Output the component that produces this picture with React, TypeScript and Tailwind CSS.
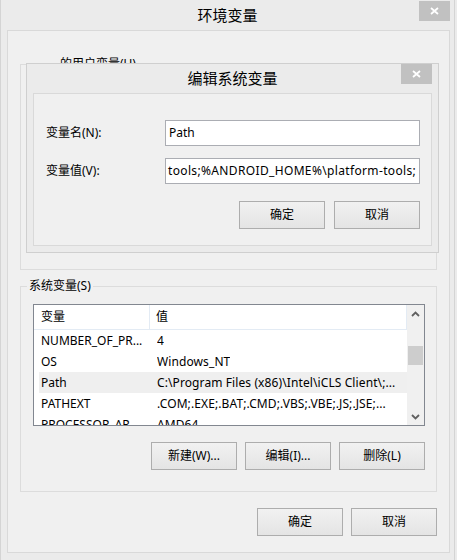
import React from "react";

const rows = [
  { name: "NUMBER_OF_PR...", value: "4" },
  { name: "OS", value: "Windows_NT" },
  { name: "Path", value: "C:\\Program Files (x86)\\Intel\\iCLS Client\\;...", selected: true },
  { name: "PATHEXT", value: ".COM;.EXE;.BAT;.CMD;.VBS;.VBE;.JS;.JSE;..." },
  { name: "PROCESSOR_AR...", value: "AMD64" },
];

const WinButton = ({ children }: { children: React.ReactNode }) => (
  <button
    type="button"
    className="h-[28px] w-[86px] border border-[#adadad] bg-linear-to-b from-[#f1f1f1] to-[#e4e4e4] text-[12px] text-black"
  >
    {children}
  </button>
);

const CloseButton = ({ className }: { className: string }) => (
  <div className={`absolute flex h-[20px] w-[31px] items-center justify-center bg-[#c1c1c1] ${className}`}>
    <svg width="9" height="8" viewBox="0 0 9 8">
      <path d="M1 1L8 7M8 1L1 7" stroke="white" strokeWidth="1.8" />
    </svg>
  </div>
);

const Chevron = ({ up }: { up?: boolean }) => (
  <svg width="9" height="6" viewBox="0 0 9 6">
    <path
      d={up ? "M1 5L4.5 1.5L8 5" : "M1 1L4.5 4.5L8 1"}
      stroke="#606060"
      strokeWidth="1.8"
      fill="none"
    />
  </svg>
);

const App = () => {
  return (
    <div className="h-[560px] w-[457px] bg-[#ebebeb] font-[Noto_Sans,Noto_Sans_CJK_SC,sans-serif] text-[12px] text-black">
      <div className="relative h-[560px] w-[455px] border-x border-[#d4d4d4] bg-[#ebebeb]">
        {/* main title bar */}
        <div className="flex h-[30px] items-center justify-center text-[15px]">环境变量</div>
        <CloseButton className="left-[418px] top-[1px]" />

        {/* main client */}
        <div className="ml-[6px] h-[523px] w-[443px] border border-[#d9d9d9] bg-[#f0f0f0]">
          <fieldset className="ml-[12px] mt-[25px] h-[214px] w-[417px] border border-[#dcdcdc]">
            <legend className="ml-[37px] px-[2px] leading-[16px]">的用户变量(U)</legend>
          </fieldset>

          <fieldset className="ml-[12px] mt-[8px] h-[214px] w-[417px] border border-[#dcdcdc]">
            <legend className="ml-[6px] px-[2px] leading-[16px]">系统变量(S)</legend>

            {/* list view */}
            <div className="ml-[12px] mt-[10px] flex h-[122px] w-[392px] border border-[#828790] bg-white">
              <div className="w-[373px] overflow-hidden">
                <div className="flex h-[25px] items-center border-b border-r border-[#e3ebf4]">
                  <div className="h-full w-[116px] border-r border-[#e3ebf4] pl-[7px] leading-[24px]">变量</div>
                  <div className="pl-[6px]">值</div>
                </div>
                {rows.map((row) => (
                  <div
                    key={row.name}
                    className={`ml-[5px] flex h-[21px] items-center whitespace-nowrap ${
                      row.selected ? "bg-[#efefef]" : ""
                    }`}
                  >
                    <div className="w-[118px] pl-[2px]">{row.name}</div>
                    <div className="overflow-hidden tracking-[0.1px]">{row.value}</div>
                  </div>
                ))}
              </div>
              {/* scrollbar */}
              <div className="flex w-[17px] flex-col items-center bg-[#f0f0f0]">
                <div className="flex h-[17px] w-full items-center justify-center">
                  <Chevron up />
                </div>
                <div className="ml-[-1px] mt-[24px] h-[19px] w-[15px] bg-[#cdcdcd]" />
                <div className="flex-1" />
                <div className="flex h-[17px] w-full items-center justify-center">
                  <Chevron />
                </div>
              </div>
            </div>

            <div className="mt-[16px] flex justify-end gap-[8px] pr-[11px]">
              <WinButton>新建(W)...</WinButton>
              <WinButton>编辑(I)...</WinButton>
              <WinButton>删除(L)</WinButton>
            </div>
          </fieldset>

          <div className="mt-[16px] flex justify-end gap-[8px] pr-[12px]">
            <WinButton>确定</WinButton>
            <WinButton>取消</WinButton>
          </div>
        </div>

        {/* edit system variable dialog */}
        <div className="absolute left-[25px] top-[63px] h-[190px] w-[413px] border border-[#cfcfcf] bg-[#ebebeb]">
          <div className="flex h-[29px] items-center justify-center text-[15px]">编辑系统变量</div>
          <CloseButton className="left-[374px] top-0" />
          <div className="ml-[6px] h-[153px] w-[399px] border border-[#d9d9d9] bg-[#f0f0f0]">
            <div className="mt-[26px] flex items-center">
              <div className="w-[131px] pl-[12px]">变量名(N):</div>
              <div className="h-[26px] w-[255px] border border-[#abadb3] bg-white px-[3px] leading-[24px]">Path</div>
            </div>
            <div className="mt-[12px] flex items-center">
              <div className="w-[131px] pl-[12px]">变量值(V):</div>
              <div className="h-[26px] w-[255px] overflow-hidden whitespace-nowrap border border-[#abadb3] bg-white px-[2px] leading-[24px] tracking-[0.35px]">
                tools;%ANDROID_HOME%\platform-tools;
              </div>
            </div>
            <div className="mt-[17px] flex justify-end gap-[9px] pr-[11px]">
              <WinButton>确定</WinButton>
              <WinButton>取消</WinButton>
            </div>
          </div>
        </div>
      </div>
    </div>
  );
};

export default App;
